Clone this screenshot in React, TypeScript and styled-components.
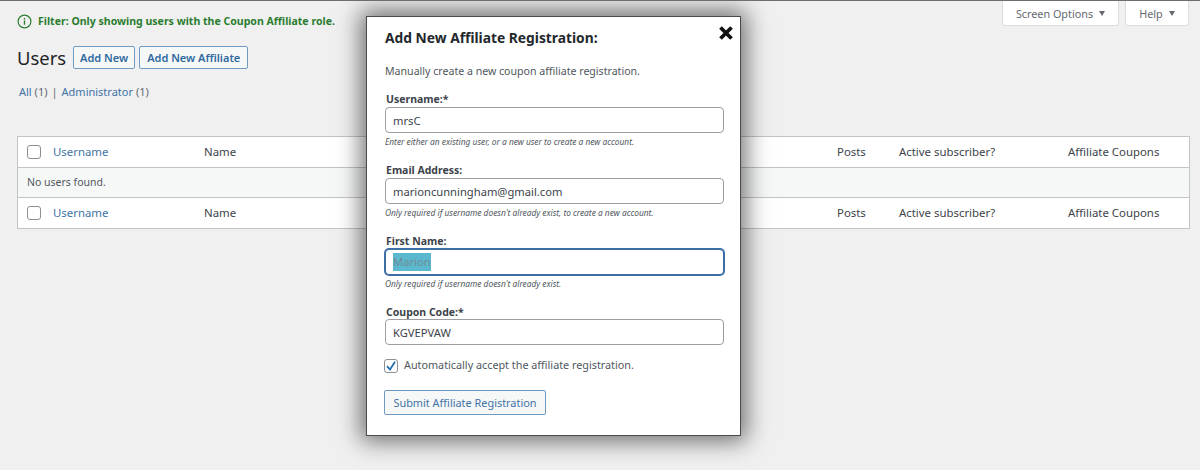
import React from "react";
import styled, { createGlobalStyle } from "styled-components";

const Global = createGlobalStyle`
  html, body { margin: 0; padding: 0; background: #f0f0f1; }
  body { font-family: "Noto Sans", "Open Sans", sans-serif; font-size: 12px; color: #3c434a; }
  * { box-sizing: border-box; }
`;

const Page = styled.div`
  position: relative;
  width: 1200px;
  height: 470px;
  overflow: hidden;
  border-top: 1px solid #6e6e6e;
  padding: 0 11px 0 17px;
`;

const ScreenMeta = styled.div`
  display: flex;
  justify-content: flex-end;
  gap: 6px;
  height: 0;
`;

const MetaTab = styled.div<{ $w: number }>`
  width: ${(p) => p.$w}px;
  height: 25px;
  background: #fff;
  border: 1px solid #dcdcde;
  border-top: 0;
  border-radius: 0 0 3px 3px;
  color: #646970;
  font-size: 10.8px;
  display: flex;
  align-items: center;
  justify-content: center;
  gap: 6px;
`;

const Caret = styled.span`
  width: 0;
  height: 0;
  border-left: 3.5px solid transparent;
  border-right: 3.5px solid transparent;
  border-top: 5px solid #646970;
`;

const Notice = styled.div`
  display: flex;
  align-items: center;
  gap: 6px;
  height: 14px;
  margin-top: 13px;
  color: #2a7d2e;
  font-weight: 700;
  font-size: 10.55px;
  white-space: nowrap;
`;

const HeadingRow = styled.div`
  display: flex;
  align-items: center;
  height: 23px;
  margin-top: 18px;
`;

const Title = styled.h1`
  margin: 0 7px 0 0;
  font-size: 18.4px;
  font-weight: 400;
  color: #1d2327;
  line-height: 23px;
`;

const OutlineButton = styled.button<{ $px: number }>`
  height: 23px;
  margin-right: 4px;
  padding: 0 ${(p) => p.$px}px;
  background: #f6f7f7;
  border: 1px solid #6f9cc4;
  border-radius: 2px;
  color: #2f6a9f;
  font-family: inherit;
  font-size: 11px;
  font-weight: 600;
`;

const Views = styled.div`
  display: flex;
  gap: 4px;
  margin: 14px 0 0 2px;
  height: 16px;
  align-items: center;
  font-size: 11px;
  color: #646970;
`;

const Link = styled.a`
  color: #3f73a6;
  text-decoration: none;
`;

const Table = styled.div`
  margin-top: 37px;
  width: 1173px;
  background: #fff;
  border: 1px solid #c3c4c7;
  font-size: 11.4px;
`;

const HeadRow = styled.div`
  display: grid;
  grid-template-columns: 26px 151px 633px 62px 169px 1fr;
  align-items: center;
  height: 30px;
  padding: 0 0 2px 9px;
`;

const EmptyRow = styled.div`
  height: 31px;
  padding: 0 0 2px 9px;
  display: flex;
  align-items: center;
  background: #f6f7f7;
  border-top: 1px solid #c3c4c7;
  border-bottom: 1px solid #c3c4c7;
  font-size: 10.5px;
  color: #50575e;
`;

const Check = styled.span`
  width: 14px;
  height: 14px;
  display: inline-flex;
  align-items: center;
  justify-content: center;
  background: #fff;
  border: 1px solid #8c8f94;
  border-radius: 3px;
`;

const HeadCheck = styled(Check)`
  margin-top: 2px;
`;

const Modal = styled.div`
  position: absolute;
  left: 366px;
  top: 15px;
  width: 375px;
  height: 420px;
  background: #fff;
  border: 1px solid #4a4a4a;
  box-shadow: 0 0 22px 5px rgba(0, 0, 0, 0.55);
  padding: 12px 16px 0 18px;
`;

const Close = styled.svg`
  position: absolute;
  right: 5px;
  top: 7px;
`;

const ModalTitle = styled.h2`
  margin: 0;
  font-size: 13.8px;
  line-height: 18px;
  font-weight: 700;
  color: #23282d;
`;

const Intro = styled.p`
  margin: 16px 0 0;
  font-size: 10.6px;
  line-height: 16px;
  color: #50575e;
`;

const Field = styled.div<{ $mt: number }>`
  margin-top: ${(p) => p.$mt}px;
`;

const Label = styled.label`
  display: block;
  margin-left: 1px;
  font-size: 10.5px;
  font-weight: 700;
  line-height: 14px;
  color: #3c434a;
`;

const Input = styled.div<{ $focus?: boolean; $tight?: boolean }>`
  height: 26px;
  margin-top: ${(p) => (p.$tight ? 0 : 1)}px;
  width: 339px;
  background: #fff;
  border: 1px solid ${(p) => (p.$focus ? "#3a6ea5" : "#9c9ea3")};
  box-shadow: ${(p) => (p.$focus ? "0 0 0 1px #3a6ea5" : "none")};
  border-radius: 4px;
  padding: 0 7px;
  display: flex;
  align-items: center;
  font-size: 11.2px;
  color: #3c434a;
`;

const Selected = styled.span`
  background: #5bb8cf;
  color: #6f8c96;
  line-height: 18px;
`;

const Hint = styled.div`
  margin-top: 3px;
  font-size: 8.35px;
  line-height: 12px;
  font-style: italic;
  color: #50575e;
`;

const AcceptRow = styled.div`
  display: flex;
  align-items: center;
  gap: 6px;
  margin: 13px 0 0 -1px;
  height: 16px;
  font-size: 10.8px;
  color: #50575e;
`;

const AcceptText = styled.span`
  margin-bottom: 4px;
`;

const SubmitButton = styled.button`
  display: block;
  margin: 16px 0 0 -1px;
  width: 162px;
  height: 25px;
  padding: 0;
  background: #f6f7f7;
  border: 1px solid #6f9cc4;
  border-radius: 2px;
  color: #3f73a6;
  font-family: inherit;
  font-size: 10.9px;
`;

const columns = (
  <>
    <HeadCheck />
    <Link>Username</Link>
    <span>Name</span>
    <span>Posts</span>
    <span>Active subscriber?</span>
    <span>Affiliate Coupons</span>
  </>
);

export default function App() {
  return (
    <Page>
      <Global />
      <ScreenMeta>
        <MetaTab $w={117}>Screen Options <Caret /></MetaTab>
        <MetaTab $w={64}>Help <Caret /></MetaTab>
      </ScreenMeta>
      <Notice>
        <svg width="15" height="15" viewBox="0 0 15 15" fill="none" stroke="#2a7d2e" strokeWidth="1.2">
          <circle cx="7.5" cy="7.5" r="6.4" />
          <path d="M7.5 6.6v4.2M7.5 4v1.4" strokeWidth="1.4" />
        </svg>
        Filter: Only showing users with the Coupon Affiliate role.
      </Notice>
      <HeadingRow>
        <Title>Users</Title>
        <OutlineButton $px={6}>Add New</OutlineButton>
        <OutlineButton $px={7}>Add New Affiliate</OutlineButton>
      </HeadingRow>
      <Views>
        <span><Link>All</Link> (1)</span>
        <span>|</span>
        <span><Link>Administrator</Link> (1)</span>
      </Views>
      <Table>
        <HeadRow>{columns}</HeadRow>
        <EmptyRow>No users found.</EmptyRow>
        <HeadRow>{columns}</HeadRow>
      </Table>
      <Modal>
        <Close width="18" height="18" viewBox="0 0 18 18">
          <path d="M3.5 3.5 14.5 14.5M14.5 3.5 3.5 14.5" stroke="#111" strokeWidth="3.8" />
        </Close>
        <ModalTitle>Add New Affiliate Registration:</ModalTitle>
        <Intro>Manually create a new coupon affiliate registration.</Intro>
        <Field $mt={13}>
          <Label>Username:*</Label>
          <Input>mrsC</Input>
          <Hint>Enter either an existing user, or a new user to create a new account.</Hint>
        </Field>
        <Field $mt={15}>
          <Label>Email Address:</Label>
          <Input>marioncunningham@gmail.com</Input>
          <Hint>Only required if username doesn't already exist, to create a new account.</Hint>
        </Field>
        <Field $mt={15}>
          <Label>First Name:</Label>
          <Input $focus><Selected>Marion</Selected></Input>
          <Hint>Only required if username doesn't already exist.</Hint>
        </Field>
        <Field $mt={15}>
          <Label>Coupon Code:*</Label>
          <Input $tight>KGVEPVAW</Input>
        </Field>
        <AcceptRow>
          <Check>
            <svg width="12" height="12" viewBox="0 0 12 12" fill="none">
              <path d="M2 6.2 5 9.6 10 1.8" stroke="#2271b1" strokeWidth="1.8" />
            </svg>
          </Check>
          <AcceptText>Automatically accept the affiliate registration.</AcceptText>
        </AcceptRow>
        <SubmitButton>Submit Affiliate Registration</SubmitButton>
      </Modal>
    </Page>
  );
}
